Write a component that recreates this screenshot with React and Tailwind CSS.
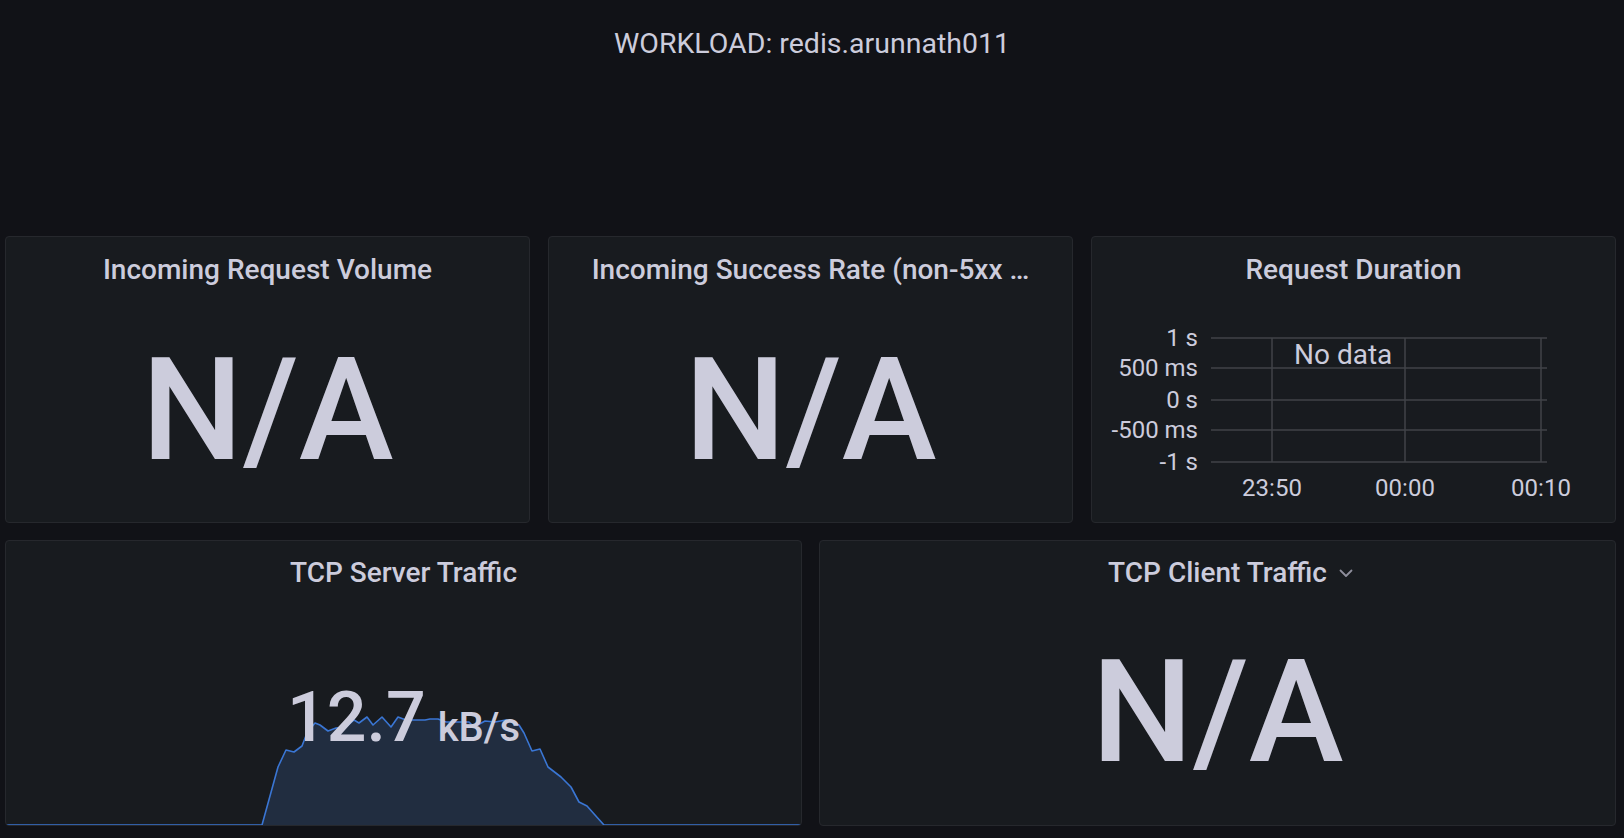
import React from "react";

const pts = [
  [0, 284], [256, 284], [272, 226], [280, 209], [288, 211], [296, 205], [301, 192],
  [309, 182], [314, 184], [322, 190], [330, 187], [340, 186], [348, 179], [353, 182],
  [361, 176], [367, 184], [376, 176], [385, 186], [392, 176], [400, 179], [419, 179],
  [424, 178], [432, 178], [440, 181], [450, 181], [463, 181], [468, 186], [479, 180],
  [489, 181], [500, 179], [513, 184], [518, 192], [526, 210], [534, 208], [542, 226],
  [555, 236], [565, 246], [573, 261], [581, 265], [589, 274], [598, 284], [795, 284],
];

function Sparkline() {
  const line = pts.map((p, i) => (i === 0 ? "M" : "L") + p[0] + " " + p[1]).join(" ");
  const area = line + " L795 285 L0 285 Z";
  return (
    <svg className="absolute left-0 top-0" width="796" height="285" viewBox="0 0 796 285">
      <path d={area} fill="#212d40" />
      <path d={line} fill="none" stroke="#3a76d4" strokeWidth="1.6" strokeLinejoin="round" />
    </svg>
  );
}

function Panel({ children, className = "" }) {
  return (
    <div className={"relative overflow-hidden rounded-[4px] border border-[#26282d] bg-[#181b1f] " + className}>
      {children}
    </div>
  );
}

function Title({ children, pt = "pt-[19px]" }) {
  return (
    <div className={"flex justify-center " + pt}>
      <div className="text-[28px] leading-none font-medium text-[#ccccdc] whitespace-nowrap">{children}</div>
    </div>
  );
}

function NA({ mt }) {
  return (
    <div className={"flex justify-center text-[143px] leading-none font-medium text-[#ccccdc] " + mt}>N/A</div>
  );
}

function DurationChart() {
  const ys = [54, 84, 116, 146, 178];
  const yl = ["1 s", "500 ms", "0 s", "-500 ms", "-1 s"];
  const xs = [180, 313, 449];
  const xl = ["23:50", "00:00", "00:10"];
  const grid = "#414349";
  return (
    <svg width="525" height="238" viewBox="0 0 525 238" className="block">
      {ys.map((y) => (
        <line key={y} x1="119" x2="455" y1={y} y2={y} stroke={grid} strokeWidth="1.5" />
      ))}
      {xs.map((x) => (
        <line key={x} x1={x} x2={x} y1="54" y2="178" stroke={grid} strokeWidth="1.5" />
      ))}
      {ys.map((y, i) => (
        <text key={i} x="106" y={y + 8} textAnchor="end" fontSize="24" fill="#ccccdc" fontFamily="Roboto, sans-serif">
          {yl[i]}
        </text>
      ))}
      {xs.map((x, i) => (
        <text key={i} x={x} y="212" textAnchor="middle" fontSize="24" fill="#ccccdc" fontFamily="Roboto, sans-serif">
          {xl[i]}
        </text>
      ))}
      <text x="202" y="80" fontSize="28" fill="#ccccdc" fontFamily="Roboto, sans-serif">No data</text>
    </svg>
  );
}

export default function App() {
  return (
    <div
      className="w-[1624px] h-[838px] overflow-hidden bg-[#111217] text-[#ccccdc]"
      style={{ fontFamily: "Roboto, 'Liberation Sans', sans-serif" }}
    >
      <div className="h-[236px] pt-[30px] flex justify-center">
        <div className="text-[28.5px] leading-none">WORKLOAD: redis.arunnath011</div>
      </div>
      <div className="pl-[5px] pr-[8px] flex flex-col gap-[17px]">
        <div className="grid grid-cols-3 gap-[18px] h-[287px]">
          <Panel>
            <Title>Incoming Request Volume</Title>
            <NA mt="mt-[55px]" />
          </Panel>
          <Panel>
            <Title>Incoming Success Rate (non-5xx …</Title>
            <NA mt="mt-[55px]" />
          </Panel>
          <Panel>
            <Title>Request Duration</Title>
            <DurationChart />
          </Panel>
        </div>
        <div className="grid grid-cols-2 gap-[17px] h-[286px]">
          <Panel>
            <Sparkline />
            <div className="relative">
              <Title pt="pt-[18px]">TCP Server Traffic</Title>
              <div className="mt-[95px] flex items-baseline justify-center text-[#ccccdc] font-medium">
                <span className="text-[70px] leading-none">12.7</span>
                <span className="ml-[12px] text-[40px] leading-none">kB/s</span>
              </div>
            </div>
          </Panel>
          <Panel>
            <div className="flex justify-center pt-[18px]">
              <div className="relative text-[28px] leading-none font-medium text-[#ccccdc] whitespace-nowrap">
                TCP Client Traffic
                <svg className="absolute left-[calc(100%+12px)] top-[10px]" width="14" height="9" viewBox="0 0 14 9">
                  <path d="M1.5 1.5 L7 7 L12.5 1.5" fill="none" stroke="#8e8e9c" strokeWidth="1.8" strokeLinecap="round" strokeLinejoin="round" />
                </svg>
              </div>
            </div>
            <NA mt="mt-[54px]" />
          </Panel>
        </div>
      </div>
    </div>
  );
}
